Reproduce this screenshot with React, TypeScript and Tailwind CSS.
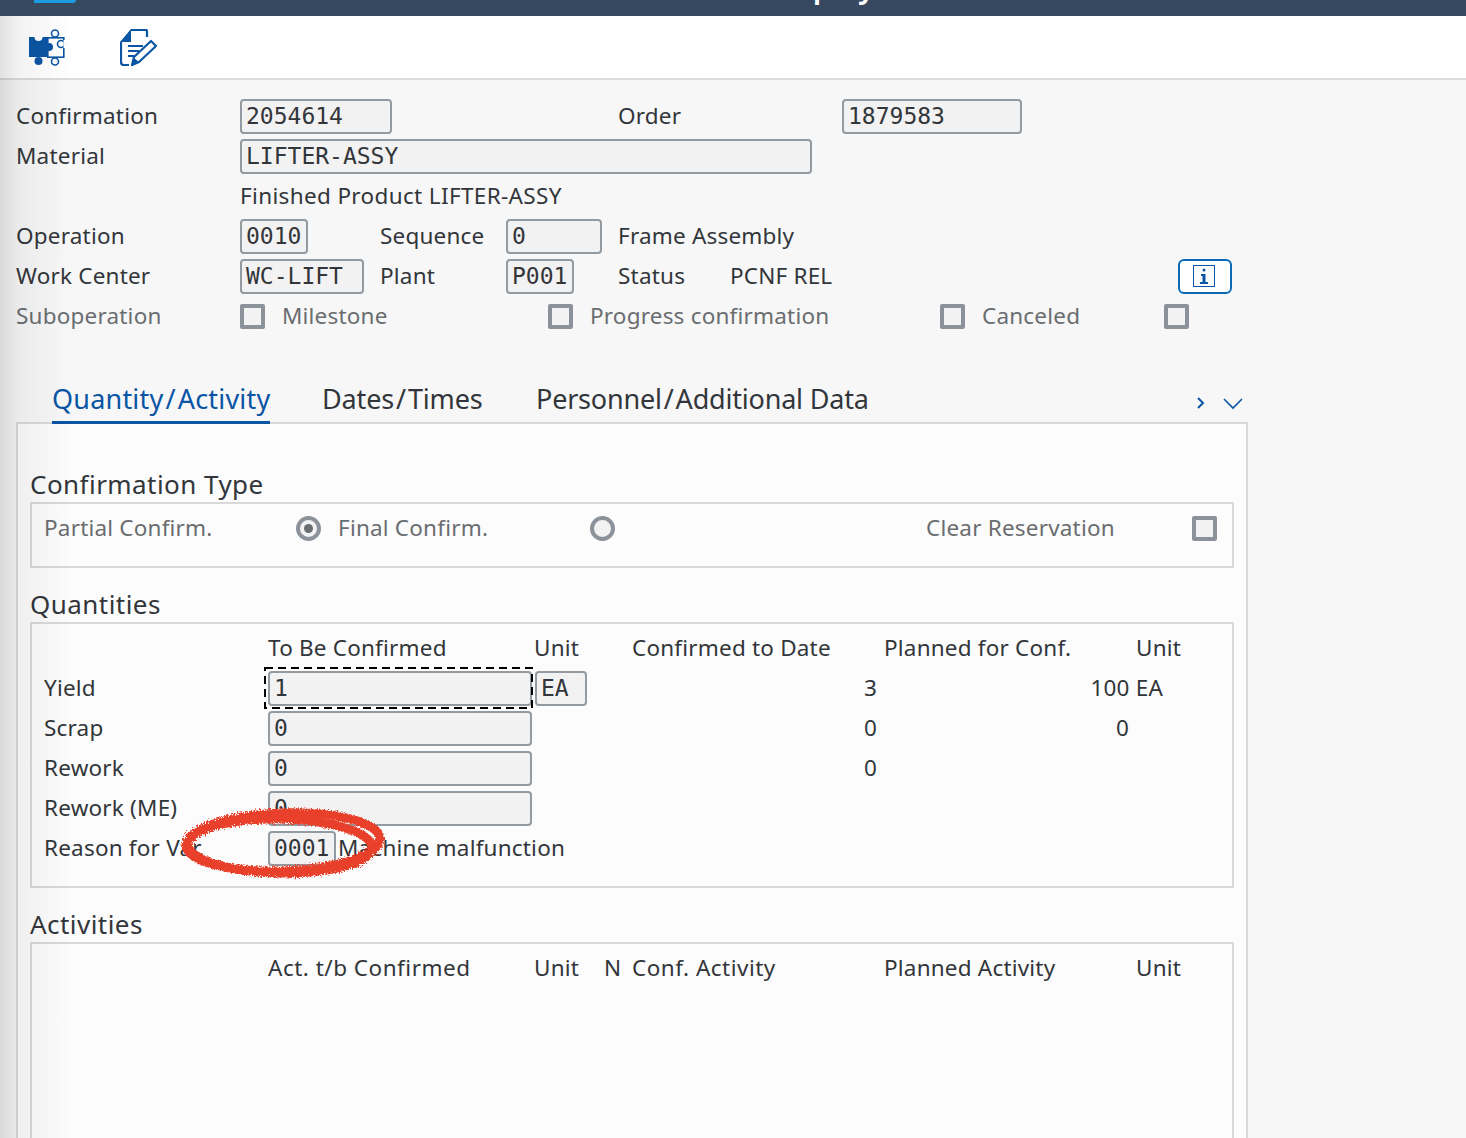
import type { ReactNode } from 'react'

const sans = "font-['Noto_Sans',sans-serif]"

function Field({ value, w }: { value: string; w: string }) {
  return (
    <div className={`h-[35px] ${w} shrink-0 rounded-[4px] border-2 border-[#929aa2] bg-[#f2f2f2] pl-1 font-['DejaVu_Sans_Mono',monospace] text-[23px] leading-[31px] tracking-normal text-[#32363a]`}>
      {value}
    </div>
  )
}

function Check() {
  return <div className="h-[25px] w-[25px] shrink-0 rounded-[2px] border-4 border-[#8b929a] bg-[#f2f2f2]" />
}

function Radio({ on }: { on?: boolean }) {
  return (
    <div className="flex h-[25px] w-[25px] shrink-0 items-center justify-center rounded-full border-4 border-[#8b929a] bg-[#f2f2f2]">
      {on && <div className="h-[9px] w-[9px] rounded-full bg-[#6a6d70]" />}
    </div>
  )
}

function Label({ children, w, muted }: { children?: ReactNode; w: string; muted?: boolean }) {
  return <div className={`${w} shrink-0 whitespace-nowrap ${muted ? 'text-[#6a6d70]' : ''}`}>{children}</div>
}

function Row({ children, className = '' }: { children: ReactNode; className?: string }) {
  return <div className={`flex h-10 items-center ${className}`}>{children}</div>
}

function Group({ title, children, className }: { title: string; children: ReactNode; className: string }) {
  return (
    <div>
      <div className="h-[41px] pt-[5px] text-[26px] leading-[36px] tracking-[0.45px] text-[#32363a]">{title}</div>
      <div className={`border-2 border-[#d9d9d9] bg-[#fcfcfc] ${className}`}>{children}</div>
    </div>
  )
}

function Slash() {
  return <span className="px-[2px]">/</span>
}

function App() {
  return (
    <div className={`relative h-[1138px] w-[1466px] overflow-hidden bg-[#f7f7f7] text-[22.5px] leading-8 tracking-[0.2px] text-[#32363a] ${sans}`}>
      {/* Title bar, only the descenders of the title show */}
      <div className="relative h-4 overflow-hidden bg-[#36495f]">
        <div className="absolute left-[34px] top-0 h-[3px] w-[42px] rounded-br-[6px] bg-[#1c9ce0]" />
        <div className="absolute left-[767px] top-[-31px] text-[30px] font-semibold leading-9 text-white">Display</div>
      </div>

      {/* Toolbar */}
      <div className="flex h-[64px] items-start border-b-2 border-[#dcdcdc] bg-white pl-7 pt-[13px] text-[#0a55a4]">
        <svg width="38" height="38" viewBox="0 0 38 38" fill="none">
          <rect x="19.8" y="8.8" width="16" height="19.4" stroke="currentColor" strokeWidth="1.6" />
          <circle cx="27" cy="4.5" r="3.5" fill="#fff" stroke="currentColor" strokeWidth="1.6" />
          <circle cx="27" cy="32.5" r="3.5" fill="#fff" stroke="currentColor" strokeWidth="1.6" />
          <circle cx="33" cy="15" r="3.5" fill="#fff" stroke="currentColor" strokeWidth="1.6" />
          <path d="M36.5 11v8" stroke="#fff" strokeWidth="2" />
          <rect x="1" y="8" width="19" height="20" fill="currentColor" />
          <circle cx="10.5" cy="8" r="4" fill="#fff" />
          <circle cx="10.5" cy="32" r="4" fill="currentColor" />
          <circle cx="21" cy="18" r="4" fill="currentColor" />
        </svg>
        <svg className="ml-[54px]" width="38" height="38" viewBox="0 0 38 38" fill="none">
          <path d="M11 1h15a1 1 0 0 1 1 1v6" stroke="currentColor" strokeWidth="2.2" />
          <path d="M1 13v20c0 2 1 3 3 3h5" stroke="currentColor" strokeWidth="2.2" />
          <path d="M0 13 11 0v13z" fill="currentColor" />
          <path d="M8 17h15M8 22h11M8 27h6" stroke="currentColor" strokeWidth="2" />
          <path d="M12 36l2-8L31 12l5 5-17 16z" stroke="currentColor" strokeWidth="2.2" strokeLinejoin="round" />
          <path d="M11 37l3-8 5 4z" fill="currentColor" />
        </svg>
      </div>

      {/* Header fields */}
      <div className="pl-4 pt-[16px]">
        <Row>
          <Label w="w-[224px]">Confirmation</Label>
          <Field value="2054614" w="w-[152px]" />
          <div className="ml-[226px] w-[224px] shrink-0">Order</div>
          <Field value="1879583" w="w-[180px]" />
        </Row>
        <Row>
          <Label w="w-[224px]">Material</Label>
          <Field value="LIFTER-ASSY" w="w-[572px]" />
        </Row>
        <Row>
          <div className="ml-[224px] tracking-[0.35px]">Finished Product LIFTER-ASSY</div>
        </Row>
        <Row>
          <Label w="w-[224px]">Operation</Label>
          <Field value="0010" w="w-[68px]" />
          <div className="ml-[72px] w-[126px] shrink-0">Sequence</div>
          <Field value="0" w="w-[96px]" />
          <div className="ml-4">Frame Assembly</div>
        </Row>
        <Row>
          <Label w="w-[224px]">Work Center</Label>
          <Field value="WC-LIFT" w="w-[124px]" />
          <div className="ml-4 w-[126px] shrink-0">Plant</div>
          <Field value="P001" w="w-[68px]" />
          <div className="ml-[44px] w-[112px] shrink-0">Status</div>
          <div className="w-[448px] shrink-0">PCNF REL</div>
          <div className="flex h-[35px] w-[54px] shrink-0 items-center justify-center rounded-[6px] border-2 border-[#0a6ab8] bg-white pr-[3px]">
            <svg width="22" height="22" viewBox="0 0 22 22" fill="none" className="text-[#0a55a4]">
              <rect x="0.5" y="0.5" width="21" height="21" stroke="currentColor" />
              <circle cx="11" cy="5" r="1.5" fill="currentColor" />
              <path d="M8 9h4.5v8H15v2H7v-2h2.5v-6H8z" fill="currentColor" />
            </svg>
          </div>
        </Row>
        <Row>
          <Label w="w-[224px]" muted>Suboperation</Label>
          <Check />
          <Label w="w-[283px]" muted><span className="ml-[17px]">Milestone</span></Label>
          <Check />
          <Label w="w-[367px]" muted><span className="ml-[17px]">Progress confirmation</span></Label>
          <Check />
          <Label w="w-[199px]" muted><span className="ml-[17px]">Canceled</span></Label>
          <Check />
        </Row>
      </div>

      {/* Tabs */}
      <div className="relative z-10 ml-[52px] mt-[43px] flex h-[43px] w-[1180px] items-start pt-[2px] text-[27px] leading-9">
        <div className="h-[43px] border-b-[3px] border-[#0a55a4] tracking-[0.2px] text-[#0a55a4]">Quantity<Slash />Activity</div>
        <div className="absolute left-[270px] tracking-[-0.15px]">Dates<Slash />Times</div>
        <div className="absolute left-[484px] whitespace-nowrap tracking-[-0.2px]">Personnel<Slash />Additional Data</div>
        <svg className="absolute left-[1144px] top-[17px] text-[#0a55a4]" width="48" height="16" viewBox="0 0 48 16" fill="none" stroke="currentColor">
          <path d="M2 2l5 5-5 5" strokeWidth="2" />
          <path d="M28 3l9 9 9-9" strokeWidth="1.6" />
        </svg>
      </div>

      {/* Tab body */}
      <div className="ml-4 h-[716px] w-[1232px] border-2 border-b-0 border-[#d9d9d9] bg-[#fcfcfc] pl-3 pr-3 pt-[37px]">
        <Group title="Confirmation Type" className="h-[66px] pl-3 pt-[6px]">
          <Row className="h-[36px]">
            <Label w="w-[252px]" muted>Partial Confirm.</Label>
            <Radio on />
            <Label w="w-[269px]" muted><span className="ml-[17px]">Final Confirm.</span></Label>
            <Radio />
            <div className="ml-[311px] w-[266px] shrink-0 whitespace-nowrap text-[#6a6d70]">Clear Reservation</div>
            <Check />
          </Row>
        </Group>

        <div className="mt-[13px]">
          <Group title="Quantities" className="h-[266px] pl-3 pt-[4px]">
            <Row>
              <div className="ml-[224px] w-[266px] shrink-0">To Be Confirmed</div>
              <div className="w-[98px] shrink-0">Unit</div>
              <div className="w-[252px] shrink-0 whitespace-nowrap">Confirmed to Date</div>
              <div className="w-[252px] shrink-0 whitespace-nowrap">Planned for Conf.</div>
              <div>Unit</div>
            </Row>
            <Row>
              <Label w="w-[224px]">Yield</Label>
              <div className="relative shrink-0">
                <Field value="1" w="w-[264px]" />
                {/* Focus frame */}
                <svg className="absolute -left-[4px] -top-[4px] overflow-visible" width="270" height="42" fill="none">
                  <rect x="1" y="1" width="267" height="40" stroke="#000" strokeWidth="2" strokeDasharray="8 5" />
                </svg>
              </div>
              <div className="ml-[3px] shrink-0"><Field value="EA" w="w-[52px]" /></div>
              <div className="w-[290px] shrink-0 text-right">3</div>
              <div className="w-[286px] shrink-0 text-right">100 EA</div>
            </Row>
            <Row>
              <Label w="w-[224px]">Scrap</Label>
              <Field value="0" w="w-[264px]" />
              <div className="w-[345px] shrink-0 text-right">0</div>
              <div className="w-[252px] shrink-0 text-right">0</div>
            </Row>
            <Row>
              <Label w="w-[224px]">Rework</Label>
              <Field value="0" w="w-[264px]" />
              <div className="w-[345px] shrink-0 text-right">0</div>
            </Row>
            <Row>
              <Label w="w-[224px]">Rework (ME)</Label>
              <Field value="0" w="w-[264px]" />
            </Row>
            <Row>
              <Label w="w-[224px]">Reason for Var.</Label>
              <Field value="0001" w="w-[68px]" />
              <div className="ml-[2px] whitespace-nowrap">Machine malfunction</div>
            </Row>
          </Group>
        </div>

        <div className="mt-[13px]">
          <Group title="Activities" className="h-[200px] border-b-0 pl-3 pt-[4px]">
            <Row>
              <div className="ml-[224px] w-[266px] shrink-0 whitespace-nowrap tracking-[0.5px]">Act. t/b Confirmed</div>
              <div className="w-[70px] shrink-0">Unit</div>
              <div className="w-[28px] shrink-0">N</div>
              <div className="w-[252px] shrink-0 whitespace-nowrap tracking-[0.5px]">Conf. Activity</div>
              <div className="w-[252px] shrink-0 whitespace-nowrap">Planned Activity</div>
              <div>Unit</div>
            </Row>
          </Group>
        </div>
      </div>

      {/* Left edge shadow */}
      <div className="pointer-events-none absolute bottom-0 left-0 top-4 z-20 w-[72px] bg-gradient-to-r from-black/12 via-black/5 via-25% to-transparent" />

      {/* Red hand-drawn ellipse on top of the screenshot */}
      <svg className="pointer-events-none absolute left-[174px] top-[800px] z-20" width="218" height="88" viewBox="0 0 218 88" fill="none">
        <defs>
          <filter id="rough" x="-10%" y="-20%" width="120%" height="140%">
            <feTurbulence type="fractalNoise" baseFrequency="0.7" numOctaves="2" seed="4" />
            <feDisplacementMap in="SourceGraphic" scale="7" />
          </filter>
        </defs>
        <g filter="url(#rough)" stroke="#e8402a">
          <ellipse cx="109" cy="42" rx="97" ry="29" strokeWidth="9" transform="rotate(-2 109 42)" />
          <ellipse cx="106" cy="46" rx="92" ry="27" strokeWidth="9" transform="rotate(1 106 46)" />
        </g>
      </svg>
    </div>
  )
}

export default App
